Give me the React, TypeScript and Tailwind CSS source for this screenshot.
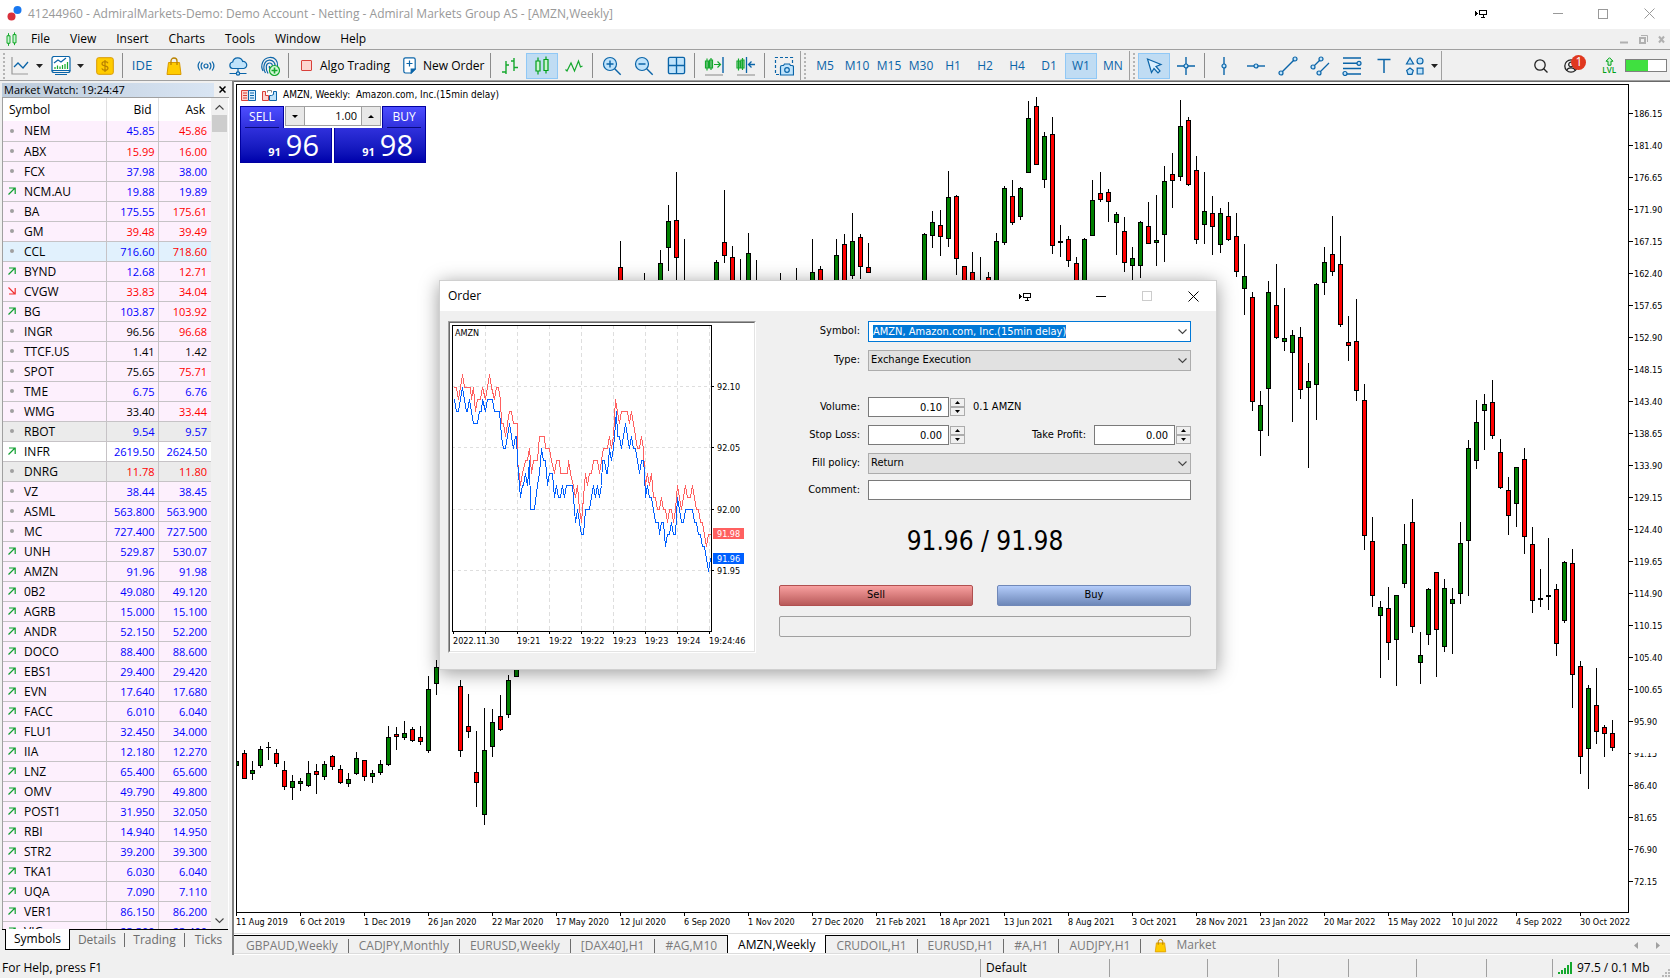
// src/App.tsx
import React, { useEffect, useRef, useState } from 'react';

type Tone = 'blue' | 'red' | 'black';
type Trend = 'flat' | 'up' | 'down';

interface Quote {
  symbol: string;
  bid: string;
  ask: string;
  trend: Trend;
  bidTone: Tone;
  askTone: Tone;
  row?: string;
}

const quote = (
  symbol: string,
  bid: string,
  ask: string,
  trend: Trend = 'up',
  bidTone: Tone = 'blue',
  askTone: Tone = 'blue',
  row?: string,
): Quote => ({ symbol, bid, ask, trend, bidTone, askTone, row });

const QUOTES: Quote[] = [
  quote('NEM', '45.85', '45.86', 'flat', 'blue', 'red'),
  quote('ABX', '15.99', '16.00', 'flat', 'red', 'red'),
  quote('FCX', '37.98', '38.00', 'flat'),
  quote('NCM.AU', '19.88', '19.89'),
  quote('BA', '175.55', '175.61', 'flat', 'blue', 'red'),
  quote('GM', '39.48', '39.49', 'flat', 'red', 'red'),
  quote('CCL', '716.60', '718.60', 'flat', 'blue', 'red', 'bg-[#e1f1fd]'),
  quote('BYND', '12.68', '12.71', 'up', 'blue', 'red'),
  quote('CVGW', '33.83', '34.04', 'down', 'red', 'red'),
  quote('BG', '103.87', '103.92', 'up', 'blue', 'red'),
  quote('INGR', '96.56', '96.68', 'flat', 'black', 'red'),
  quote('TTCF.US', '1.41', '1.42', 'flat', 'black', 'black'),
  quote('SPOT', '75.65', '75.71', 'flat', 'black', 'red'),
  quote('TME', '6.75', '6.76', 'flat'),
  quote('WMG', '33.40', '33.44', 'flat', 'black', 'red'),
  quote('RBOT', '9.54', '9.57', 'flat', 'blue', 'blue', 'bg-[#ebebeb]'),
  quote('INFR', '2619.50', '2624.50', 'up', 'blue', 'blue', 'bg-white'),
  quote('DNRG', '11.78', '11.80', 'flat', 'red', 'red', 'bg-[#ebebeb]'),
  quote('VZ', '38.44', '38.45', 'flat'),
  quote('ASML', '563.800', '563.900', 'flat'),
  quote('MC', '727.400', '727.500', 'flat'),
  quote('UNH', '529.87', '530.07'),
  quote('AMZN', '91.96', '91.98'),
  quote('0B2', '49.080', '49.120'),
  quote('AGRB', '15.000', '15.100'),
  quote('ANDR', '52.150', '52.200'),
  quote('DOCO', '88.400', '88.600'),
  quote('EBS1', '29.400', '29.420'),
  quote('EVN', '17.640', '17.680'),
  quote('FACC', '6.010', '6.040'),
  quote('FLU1', '32.450', '34.000'),
  quote('IIA', '12.180', '12.270'),
  quote('LNZ', '65.400', '65.600'),
  quote('OMV', '49.790', '49.800'),
  quote('POST1', '31.950', '32.050'),
  quote('RBI', '14.940', '14.950'),
  quote('STR2', '39.200', '39.300'),
  quote('TKA1', '6.030', '6.040'),
  quote('UQA', '7.090', '7.110'),
  quote('VER1', '86.150', '86.200'),
  quote('VIG', '23.300', '23.400'),
];

const TONES: Record<Tone, string> = {
  blue: 'text-[#0000ff]',
  red: 'text-[#ff0000]',
  black: 'text-black',
};

// [bar index, high, body top, body bottom, low, 1 = rising bar]
const CANDLES: number[][] = [
  [-1, 761, 761, 765, 765, 1], [0, 750, 753, 778, 778, 0], [1, 761, 770, 773, 779, 1],
  [2, 746, 749, 765, 767, 1], [3, 742, 747, 747, 759, 1], [4, 749, 753, 763, 766, 0],
  [5, 761, 770, 786, 789, 0], [6, 775, 781, 787, 799, 1], [7, 778, 781, 783, 790, 1],
  [8, 761, 773, 785, 786, 1], [9, 764, 771, 774, 793, 0], [10, 761, 764, 776, 779, 1],
  [11, 755, 756, 766, 769, 0], [12, 765, 769, 782, 783, 0], [13, 773, 779, 783, 786, 1],
  [14, 752, 758, 773, 774, 1], [15, 760, 760, 776, 780, 0], [16, 770, 773, 776, 782, 1],
  [17, 760, 764, 772, 774, 1], [18, 726, 737, 764, 765, 1], [19, 727, 734, 736, 749, 0],
  [20, 721, 733, 737, 739, 1], [21, 727, 729, 740, 741, 0], [22, 726, 737, 741, 744, 0],
  [23, 676, 689, 750, 752, 1], [24, 660, 667, 683, 694, 1], [27, 680, 686, 750, 756, 0],
  [28, 694, 726, 731, 737, 0], [29, 731, 772, 782, 806, 0], [30, 708, 750, 814, 824, 1],
  [31, 709, 722, 746, 756, 1], [32, 695, 716, 729, 730, 0], [33, 675, 680, 714, 717, 1],
  [34, 640, 650, 676, 676, 1], [47, 241, 267, 300, 300, 0], [50, 273, 290, 300, 300, 0],
  [52, 250, 263, 300, 300, 1], [53, 205, 221, 247, 270, 1], [54, 172, 220, 257, 300, 0],
  [55, 239, 290, 300, 300, 0], [59, 260, 262, 300, 300, 1], [60, 190, 242, 255, 262, 0],
  [61, 246, 257, 300, 300, 0], [62, 259, 290, 300, 300, 0], [63, 233, 253, 300, 300, 1],
  [64, 260, 290, 300, 300, 0], [67, 273, 290, 300, 300, 0], [69, 268, 290, 300, 300, 0],
  [71, 239, 272, 300, 300, 1], [72, 266, 269, 300, 300, 0], [74, 239, 255, 300, 300, 1],
  [75, 234, 244, 300, 300, 0], [76, 213, 241, 275, 278, 1], [77, 234, 237, 266, 278, 0],
  [78, 243, 267, 272, 272, 0], [85, 233, 234, 300, 300, 1], [86, 211, 222, 235, 247, 1],
  [87, 210, 225, 236, 255, 0], [88, 171, 197, 238, 246, 1], [89, 195, 196, 258, 274, 0],
  [90, 266, 266, 300, 300, 0], [91, 252, 272, 300, 300, 0], [92, 257, 290, 300, 300, 0],
  [93, 272, 277, 300, 300, 0], [94, 233, 241, 300, 300, 1], [95, 186, 188, 242, 244, 1],
  [96, 180, 196, 222, 224, 0], [97, 187, 188, 216, 219, 1], [98, 101, 118, 172, 172, 1],
  [99, 97, 106, 164, 164, 0], [100, 132, 136, 179, 187, 1], [101, 117, 134, 245, 253, 0],
  [102, 225, 241, 242, 256, 1], [103, 236, 239, 260, 266, 0], [104, 257, 263, 300, 300, 0],
  [105, 238, 239, 300, 300, 1], [106, 180, 200, 235, 235, 1], [107, 172, 193, 199, 201, 0],
  [108, 189, 192, 201, 221, 0], [109, 212, 214, 222, 254, 1], [110, 217, 231, 262, 271, 0],
  [111, 247, 258, 265, 300, 1], [112, 221, 222, 265, 277, 1], [113, 202, 226, 243, 243, 0],
  [114, 195, 240, 242, 265, 1], [115, 166, 181, 234, 261, 1], [116, 153, 174, 180, 207, 0],
  [117, 100, 126, 176, 180, 1], [118, 117, 120, 184, 185, 0], [119, 156, 170, 239, 243, 0],
  [120, 172, 211, 224, 243, 1], [121, 196, 213, 226, 254, 0], [122, 208, 213, 244, 252, 1],
  [123, 202, 216, 239, 240, 0], [124, 213, 236, 271, 276, 0], [125, 244, 276, 288, 314, 1],
  [126, 292, 297, 401, 410, 0], [127, 391, 405, 430, 455, 1], [128, 281, 292, 388, 435, 1],
  [129, 264, 305, 337, 338, 0], [130, 288, 338, 341, 350, 1], [131, 330, 335, 352, 421, 1],
  [132, 327, 337, 389, 398, 0], [133, 363, 381, 387, 467, 1], [134, 283, 284, 384, 419, 1],
  [135, 247, 262, 282, 294, 1], [136, 216, 254, 271, 275, 0], [137, 236, 264, 324, 326, 0],
  [138, 316, 342, 345, 360, 0], [139, 299, 341, 390, 400, 0], [140, 384, 400, 535, 549, 0],
  [141, 517, 541, 595, 606, 0], [142, 601, 607, 615, 677, 1], [143, 587, 608, 642, 659, 0],
  [144, 595, 595, 639, 685, 1], [145, 524, 544, 583, 587, 1], [146, 499, 522, 626, 632, 0],
  [147, 632, 655, 662, 683, 1], [148, 588, 589, 634, 644, 1], [149, 572, 572, 629, 676, 0],
  [150, 579, 588, 646, 651, 1], [151, 588, 599, 603, 653, 1], [152, 522, 543, 593, 603, 1],
  [153, 440, 448, 540, 595, 1], [154, 400, 422, 460, 468, 1], [155, 394, 404, 410, 449, 1],
  [156, 380, 402, 435, 438, 0], [157, 439, 452, 487, 488, 0], [158, 477, 490, 515, 534, 0],
  [159, 467, 467, 503, 526, 1], [160, 448, 459, 536, 553, 0], [161, 527, 544, 600, 612, 0],
  [162, 569, 598, 599, 606, 1], [163, 538, 595, 596, 609, 1], [164, 584, 589, 643, 655, 0],
  [165, 561, 562, 620, 622, 1], [166, 549, 563, 674, 707, 0], [167, 661, 666, 756, 773, 0],
  [168, 685, 688, 748, 788, 1], [169, 668, 705, 731, 743, 0], [170, 725, 727, 733, 756, 0],
  [171, 720, 733, 747, 750, 0],
];

const CHART_DATES = [
  '11 Aug 2019', '6 Oct 2019', '1 Dec 2019', '26 Jan 2020', '22 Mar 2020', '17 May 2020',
  '12 Jul 2020', '6 Sep 2020', '1 Nov 2020', '27 Dec 2020', '21 Feb 2021', '18 Apr 2021',
  '13 Jun 2021', '8 Aug 2021', '3 Oct 2021', '28 Nov 2021', '23 Jan 2022', '20 Mar 2022',
  '15 May 2022', '10 Jul 2022', '4 Sep 2022', '30 Oct 2022',
];

// Tick history: [time in thirds of a pixel, cents above 92.00]
const ASK_TICKS: number[][] = [
  [70, 10], [79, 10], [84, 9], [90, 10], [95, 11], [101, 10], [119, 10], [123, 9], [128, 10],
  [134, 8], [140, 9], [151, 9], [157, 10], [166, 9], [171, 10], [177, 11], [183, 10], [192, 9],
  [198, 10], [203, 10], [209, 9], [212, 7], [219, 7], [226, 6], [231, 7], [236, 8], [243, 8],
  [248, 7], [260, 7], [262, 4], [270, 2], [276, 3], [284, 4], [291, 4], [297, 5], [303, 3],
  [308, 4], [322, 4], [327, 6], [341, 6], [345, 5], [358, 5], [363, 4], [372, 3], [378, 4],
  [386, 4], [390, 3], [410, 3], [415, 4], [421, 3], [428, 2], [435, 1], [441, 2], [447, 0],
  [453, -1], [459, 1], [465, 3], [471, 2], [477, 3], [484, 3], [489, 4], [502, 4], [507, 3],
  [513, 4], [518, 5], [532, 5], [537, 6], [543, 5], [549, 6], [555, 9], [560, 8], [567, 7],
  [572, 8], [592, 8], [597, 7], [603, 8], [609, 7], [614, 6], [620, 5], [627, 5], [632, 6],
  [638, 5], [643, 3], [645, 2], [651, 3], [656, 2], [662, 3], [668, 1], [676, 1], [681, 0],
  [688, 0], [693, 1], [699, 0], [705, 0], [711, -1], [717, 0], [723, 0], [729, -1], [735, 0],
  [741, 2], [747, 1], [753, 0], [759, 1], [765, 2], [771, 1], [781, 1], [786, 2], [792, 1],
  [798, 0], [803, 0], [809, -1], [816, -1], [822, -2], [829, -3], [834, -2], [843, -2],
];

const BID_TICKS: number[][] = [
  [70, 9], [73, 9], [77, 8], [85, 8], [90, 9], [96, 10], [101, 9], [108, 8], [112, 8], [117, 9],
  [123, 8], [128, 7], [142, 7], [147, 8], [152, 8], [157, 9], [165, 8], [170, 9], [187, 9],
  [192, 8], [208, 8], [212, 6], [218, 5], [225, 5], [231, 6], [237, 7], [243, 6], [249, 5],
  [255, 6], [259, 6], [262, 4], [264, 3], [270, 1], [276, 2], [280, 2], [285, 3], [291, 2],
  [296, 4], [301, 0], [311, 0], [320, 2], [327, 3], [333, 5], [339, 4], [345, 4], [350, 2],
  [357, 3], [367, 3], [372, 1], [378, 2], [384, 1], [390, 1], [396, 2], [402, 1], [408, 2],
  [425, 2], [430, 1], [434, -1], [441, 0], [446, -1], [454, -2], [460, -2], [464, 0], [478, 0],
  [483, 1], [489, 2], [495, 1], [501, 2], [507, 1], [513, 2], [517, 4], [522, 4], [527, 3],
  [532, 3], [537, 5], [543, 4], [549, 5], [555, 7], [558, 8], [562, 6], [568, 6], [573, 5],
  [579, 6], [585, 7], [591, 6], [597, 5], [603, 6], [609, 5], [615, 5], [621, 4], [627, 3],
  [633, 4], [639, 4], [643, 3], [646, 1], [651, 2], [656, 1], [664, 1], [669, 0], [675, -1],
  [683, -1], [687, -2], [693, -1], [699, -1], [705, -3], [711, -2], [718, -2], [723, -1],
  [729, -2], [736, -2], [741, 1], [747, 0], [753, -1], [759, -1], [765, 0], [787, 0], [793, -1],
  [798, -1], [804, -2], [810, -2], [815, -3], [823, -3], [829, -4], [834, -5], [840, -4], [843, -4],
];

const BLUE = '#0a64a8';
const SKY = '#bfe3fb';
const GREEN = '#14a82d';

/* ---------- icons ---------- */

const Caret = () => (
  <svg width="7" height="4" viewBox="0 0 7 4"><path d="M0 0h7L3.5 4z" fill="#222" /></svg>
);

const Svg: React.FC<{ size?: number; children: React.ReactNode }> = ({ size = 20, children }) => (
  <svg width={size} height={size} viewBox="0 0 20 20" fill="none" stroke={BLUE} strokeWidth="1.2">
    {children}
  </svg>
);

const BagIcon: React.FC<{ size?: number }> = ({ size = 20 }) => (
  <svg width={size} height={size} viewBox="0 0 20 20" fill="none">
    <path d="M4.5 6.5h11L17 18.5H3z" fill="#fc0" stroke="#d99a00" />
    <path d="M7 9V5a3 3 0 0 1 6 0v4" stroke="#b98200" strokeWidth="1.3" />
  </svg>
);

const PinIcon = () => (
  <svg width="13" height="9" viewBox="0 0 13 9" fill="none" stroke="#000" shapeRendering="crispEdges">
    <path d="M0 2l3 2.500l-3 2.500z" fill="#000" stroke="none" />
    <path d="M4.500 1.500h7v4h-7zM8 6v2M6 8.500h4" />
  </svg>
);

const Chevron: React.FC<{ className?: string }> = ({ className }) => (
  <svg className={className} width="9" height="6" viewBox="0 0 9 6" fill="none" stroke="#444" strokeWidth="1.1">
    <path d="M.5.5l4 4l4-4" />
  </svg>
);

const CandlesIcon: React.FC<{ size?: number }> = ({ size = 20 }) => (
  <svg width={size} height={size} viewBox="0 0 20 20" fill="#c9f5d0" stroke="#00a018" strokeWidth="1.2">
    <path d="M6 1.500v17M14 .5v17" />
    <path d="M4 5h4v10H4zM12 3.500h4v11h-4z" />
  </svg>
);

const TrendIcon: React.FC<{ trend: Trend }> = ({ trend }) => {
  if (trend === 'flat') return <span className="mx-auto block size-1 rounded-full bg-[#a0a0a0]" />;
  if (trend === 'up')
    return (
      <svg className="mx-auto" width="8" height="8" viewBox="0 0 8 8" fill="none" stroke="#10a030" strokeWidth="1.2">
        <path d="M.5 7.500l6.500-6.500M1 1h6.200v6" />
      </svg>
    );
  return (
    <svg className="mx-auto" width="8" height="8" viewBox="0 0 8 8" fill="none" stroke="#f03030" strokeWidth="1.2">
      <path d="M.5.5l6.500 6.500M1 7h6.200V1" />
    </svg>
  );
};

/* ---------- toolbar ---------- */

const ToolButton: React.FC<{ label: string; active?: boolean; children: React.ReactNode }> = ({
  label,
  active,
  children,
}) => (
  <button
    type="button"
    aria-label={label}
    className={
      active
        ? 'flex h-[26px] w-8 shrink-0 items-center justify-center border border-[#90c8f6] bg-[#c0dcf3]'
        : 'flex h-[26px] w-8 shrink-0 items-center justify-center'
    }
  >
    {children}
  </button>
);

const Sep = () => <span className="mr-[3px] ml-0.5 h-[25px] w-px shrink-0 bg-[#8c8c8c]" />;

const Grip = () => (
  <span className="mx-[3px] h-[26px] w-[2px] shrink-0 bg-[repeating-linear-gradient(#b4b4b4_0_2px,transparent_2px_4px)]" />
);

const GroupEnd = () => <span className="h-full w-px shrink-0 bg-[#a0a0a0]" />;

const TIMEFRAMES = ['M5', 'M10', 'M15', 'M30', 'H1', 'H2', 'H4', 'D1', 'W1', 'MN'];

const Toolbar = () => {
  const [frame, setFrame] = useState<string>('W1');

  return (
    <div className="flex h-[30px] items-center overflow-hidden bg-[#f0f0f0] pt-px">
      <Grip />
      <button type="button" aria-label="Chart type" className="flex w-10 shrink-0 items-center gap-1.5 pl-0.5">
        <Svg>
          <path d="M2 1v17h16" stroke="#999" />
          <path d="M4 11l4-4l5 5l5-6" stroke={BLUE} strokeWidth="1.3" />
        </Svg>
        <Caret />
      </button>
      <button type="button" aria-label="Indicators" className="flex w-[42px] shrink-0 items-center gap-1.5 pl-[3px]">
        <Svg>
          <path d="M1 2.500a2 2 0 0 1 2-2h14a2 2 0 0 1 2 2v12H1z" fill="#fff" />
          <path d="M1 14.500c0 2 2 2 2 2h14s2 0 2-2M4 18.500h12" />
          <path d="M3 7l4-3l3 2l5-4" />
          <path d="M4 13v-2M6.500 13V9.500M9 13v-2.500M11.500 13V9M14 13V8M16.500 13V6" stroke={GREEN} />
        </Svg>
        <Caret />
      </button>
      <button type="button" aria-label="Deposit" className="flex w-[30px] shrink-0 justify-center">
        <svg width="18" height="18" viewBox="0 0 18 18" fill="none">
          <rect x=".7" y=".7" width="16.600" height="16.600" rx="2" fill="#fc0" stroke="#d99a00" />
          <path d="M12 6.200C11.500 5 10.500 4.700 9 4.700c-2 0-3 .8-3 2 0 3 6 1.300 6 4.400 0 1.300-1.200 2.200-3 2.200-1.600 0-2.800-.6-3.200-1.900M9 3v12" stroke="#b98200" strokeWidth="1.2" />
        </svg>
      </button>
      <Sep />
      <ToolButton label="IDE"><span className="text-[13px] text-[#0a64a8]">IDE</span></ToolButton>
      <ToolButton label="Market"><BagIcon /></ToolButton>
      <ToolButton label="Signals">
        <Svg>
          <circle cx="10" cy="10" r="2" />
          <path d="M6.500 6.500a5 5 0 0 0 0 7M13.500 6.500a5 5 0 0 1 0 7M3.800 5.500a7.500 7.500 0 0 0 0 9M16.200 5.500a7.500 7.500 0 0 1 0 9" />
        </Svg>
      </ToolButton>
      <ToolButton label="VPS">
        <Svg>
          <path d="M4.500 12.500a3.300 3.300 0 0 1 .2-6.500a5.200 5.200 0 0 1 10-.5a3.500 3.500 0 0 1 1 7z" fill={SKY} />
          <path d="M10 12.500V16M1.500 17.500h6.500M12 17.500h6.500" />
          <circle cx="10" cy="17.500" r="1.700" fill={SKY} />
        </Svg>
      </ToolButton>
      <ToolButton label="Fingerprint">
        <Svg>
          <path d="M3 15C0 9 3 2 9.500 1.500C15 1 18 5 17.500 10M5.500 17C2 11 4.500 4.500 9.500 4.200C13 4 15.300 7 15 10M8 17.500C5 12 6 7 9.500 7C11.500 7 12.500 8.500 12.500 10.500M10 13c-.6-1-.8-2-.6-3" />
          <circle cx="14.500" cy="14.500" r="5" fill="#d5f7d9" stroke={GREEN} />
          <path d="M14.500 11.500v6M11.500 14.500h6" stroke={GREEN} strokeWidth="1.600" />
        </Svg>
      </ToolButton>
      <Sep />
      <button type="button" className="flex w-[103px] shrink-0 items-center gap-2 pl-[9px] whitespace-nowrap">
        <span className="h-[11px] w-[11px] rounded-[1px] border border-[#d9403a] bg-[#fdd5d0]" />
        Algo Trading
      </button>
      <button type="button" className="flex w-[93px] shrink-0 items-center gap-[7px] pl-2 whitespace-nowrap">
        <svg width="13" height="17" viewBox="0 0 13 17" fill="none" stroke={BLUE} strokeWidth="1.200">
          <path d="M.8 2.500a1.700 1.700 0 0 1 1.700-1.700h8a1.700 1.700 0 0 1 1.700 1.700V12l-4 4H2.500a1.700 1.700 0 0 1-1.700-1.700z" fill="#fff" />
          <path d="M8.200 16v-4h4z" fill={BLUE} />
          <path d="M6.500 3.500v6M3.500 6.500h6" />
        </svg>
        New Order
      </button>
      <Sep />
      <ToolButton label="Bar chart">
        <Svg>
          <path d="M6 5v13M2 16h4M6 9h3M14 2v13M11 5h3M14 11.500h4" stroke={GREEN} strokeWidth="1.400" />
        </Svg>
      </ToolButton>
      <ToolButton label="Candlesticks" active><CandlesIcon /></ToolButton>
      <ToolButton label="Line chart">
        <Svg><path d="M1.500 13.500l1.500 1.500l4-8l3.500 8l4-10l2 6l2-1" stroke={GREEN} /></Svg>
      </ToolButton>
      <Sep />
      <ToolButton label="Zoom in">
        <Svg>
          <circle cx="8" cy="8" r="6.500" fill={SKY} />
          <path d="M12.700 12.700l6 6M8 4.500v7M4.500 8h7" strokeWidth="1.400" />
        </Svg>
      </ToolButton>
      <ToolButton label="Zoom out">
        <Svg>
          <circle cx="8" cy="8" r="6.500" fill={SKY} />
          <path d="M12.700 12.700l6 6M4.500 8h7" strokeWidth="1.400" />
        </Svg>
      </ToolButton>
      <ToolButton label="Tile windows">
        <Svg size={19}>
          <rect x="1.500" y="1.500" width="17" height="17" rx="1.500" fill={SKY} strokeWidth="1.400" />
          <path d="M10 1.500v17M1.500 10h17" strokeWidth="1.400" />
        </Svg>
      </ToolButton>
      <Sep />
      <ToolButton label="Auto scroll">
        <Svg>
          <path d="M3 2.500v12M7 2v12M1.500 5h3v7h-3zM5.500 4h3v8h-3zM10 8.500h6M13.500 5.500l3 3l-3 3" stroke={GREEN} />
          <path d="M19 1v16" strokeWidth="1.400" />
          <path d="M1 19h18" stroke="#999" />
        </Svg>
      </ToolButton>
      <ToolButton label="Chart shift">
        <Svg>
          <path d="M2.500 2.500v12M6.500 2v12M1 5h3v7H1zM5 4h3v8H5z" stroke={GREEN} />
          <path d="M10.500 1v16M19 8.500h-6M15.500 5.500l-3 3l3 3" strokeWidth="1.300" />
          <path d="M1 19h18" stroke="#999" />
        </Svg>
      </ToolButton>
      <Sep />
      <ToolButton label="Screenshot">
        <Svg>
          <path d="M5 18.500H1.500v-17h17V8" strokeDasharray="3 2" />
          <path d="M6.500 11a1.500 1.500 0 0 1 1.500-1.500h1.500l1-1.500h5l1 1.500H18a1.500 1.500 0 0 1 1.500 1.500v8h-13z" fill={SKY} />
          <circle cx="13" cy="14" r="2.300" />
        </Svg>
      </ToolButton>
      <GroupEnd />
      <Grip />
      {TIMEFRAMES.map((name) => (
        <button
          key={name}
          type="button"
          onClick={() => setFrame(name)}
          className={
            frame === name
              ? 'h-[26px] w-8 shrink-0 border border-[#90c8f6] bg-[#c0dcf3] text-[#0a64a8]'
              : 'h-[26px] w-8 shrink-0 text-[#0a64a8]'
          }
        >
          {name}
        </button>
      ))}
      <GroupEnd />
      <Grip />
      <ToolButton label="Cursor" active>
        <Svg><path d="M3.500 3l13.500 5.500l-5 2l4 4.500l-2 2l-4-4.500l-2.500 4z" fill="#d9efff" /></Svg>
      </ToolButton>
      <ToolButton label="Crosshair">
        <Svg><path d="M10 1v18M1 10h18" strokeWidth="1.400" /><circle cx="10" cy="10" r="2" fill={SKY} /></Svg>
      </ToolButton>
      <Sep />
      <ToolButton label="Vertical line">
        <Svg><path d="M10 1v18" strokeWidth="1.400" /><circle cx="10" cy="10" r="2" fill={SKY} /></Svg>
      </ToolButton>
      <ToolButton label="Horizontal line">
        <Svg><path d="M1 10h18" strokeWidth="1.400" /><circle cx="10" cy="10" r="2" fill={SKY} /></Svg>
      </ToolButton>
      <ToolButton label="Trend line">
        <Svg>
          <path d="M3 17L17 3" strokeWidth="1.400" />
          <circle cx="3" cy="17" r="2" fill={SKY} /><circle cx="17" cy="3" r="2" fill={SKY} />
        </Svg>
      </ToolButton>
      <ToolButton label="Channel">
        <Svg>
          <path d="M3 11l8-8M9 17L19 7" strokeWidth="1.300" />
          <circle cx="3" cy="11" r="2" fill={SKY} /><circle cx="11" cy="3" r="2" fill={SKY} /><circle cx="9" cy="17" r="2" fill={SKY} />
        </Svg>
      </ToolButton>
      <ToolButton label="Fibonacci">
        <Svg>
          <path d="M1 2h18M1 7.300h16M1 12.500h18M3 18h16" strokeWidth="1.400" />
          <circle cx="17" cy="7.300" r="2" fill={SKY} /><circle cx="3" cy="17.500" r="2" fill={SKY} />
        </Svg>
      </ToolButton>
      <ToolButton label="Text label">
        <Svg><path d="M3.500 3.500h13M10 3.500V17" strokeWidth="1.500" /></Svg>
      </ToolButton>
      <button type="button" aria-label="Objects" className="flex w-[41px] shrink-0 items-center gap-1.5 pl-[5px]">
        <Svg>
          <path d="M5 2l3.500 6h-7z" fill={SKY} />
          <circle cx="15" cy="5" r="3" fill={SKY} />
          <path d="M5 12l3.300 2.500l-1.300 3.800H3l-1.300-3.800z" fill={SKY} />
          <path d="M12.200 12.200h5.800V18h-5.800z" fill={SKY} />
        </Svg>
        <Caret />
      </button>
      <GroupEnd />
      <div className="ml-auto flex shrink-0 items-center pr-[3px]">
        <button type="button" aria-label="Search" className="mr-4">
          <svg width="14" height="14" viewBox="0 0 14 14" fill="none" stroke="#222" strokeWidth="1.300">
            <circle cx="6" cy="6" r="5.200" /><path d="M9.700 9.700l3.800 3.800" />
          </svg>
        </button>
        <button type="button" aria-label="Account" className="relative mr-6">
          <svg width="14" height="14" viewBox="0 0 14 14" fill="none" stroke="#222" strokeWidth="1.300">
            <circle cx="7" cy="7" r="6.200" /><circle cx="7" cy="5.500" r="2.300" /><path d="M3 11.500c.5-3.500 7.500-3.500 8 0" />
          </svg>
          <span className="absolute -top-1 left-[7px] flex size-[15px] items-center justify-center rounded-full bg-[#e0381f] text-xs text-white">1</span>
        </button>
        <div className="mr-[9px] flex flex-col items-center">
          <svg width="9" height="9" viewBox="0 0 9 9" fill="#c9f5d0" stroke="#00a018">
            <path d="M4.500.7l3.500 3.500h-2v4h-3v-4H1z" />
          </svg>
          <span className="text-[8px] leading-[8px] font-semibold text-[#00a018]">LVL</span>
        </div>
        <div className="h-[13px] w-[42px] border border-[#808080] bg-white">
          <div className="h-full w-[22px] bg-[#40e040]" />
        </div>
      </div>
    </div>
  );
};

/* ---------- market watch ---------- */

const MarketWatch = () => (
  <aside className="flex w-[230px] shrink-0 flex-col overflow-hidden border-r border-[#f0f0f0] bg-[#f0f0f0] pt-px pl-0.5">
    <div className="flex h-[15px] items-center justify-between pr-[3px]">
      <h2 className="w-[212px] bg-linear-to-r from-[#bccbdb] to-[#d9e5f3] pl-0.5 text-[11px] leading-[14px]">
        Market Watch: 19:24:47
      </h2>
      <button type="button" aria-label="Close panel">
        <svg width="7" height="7" viewBox="0 0 7 7" stroke="#000" strokeWidth="1.500"><path d="M.5.5l6 6M6.500.5l-6 6" /></svg>
      </button>
    </div>
    <div className="flex min-h-0 flex-1 overflow-hidden border-t border-l border-[#a0a0a0] bg-white">
      <div className="w-[208px] shrink-0 overflow-hidden">
        <table className="w-full table-fixed border-collapse text-xs">
          <colgroup>
            <col className="w-[18px]" />
            <col className="w-[85px]" />
            <col className="w-[52px]" />
            <col className="w-[53px]" />
          </colgroup>
          <thead>
            <tr className="h-[23px]">
              <th colSpan={2} className="border-r border-[#e0e0e0] pl-1.5 text-left font-normal">Symbol</th>
              <th className="border-r border-[#e0e0e0] pr-1.5 text-right font-normal">Bid</th>
              <th className="pr-1.5 text-right font-normal">Ask</th>
            </tr>
          </thead>
          <tbody>
            {QUOTES.map((q) => (
              <tr key={q.symbol} className={`h-5 border-b border-[#c6c3c6] ${q.row ?? 'bg-[#fdf0fd]'}`}>
                <td className="p-0"><TrendIcon trend={q.trend} /></td>
                <td className="border-r border-[#c6c3c6] p-0 pl-[3px] leading-[19px]">{q.symbol}</td>
                <td className={`border-r border-[#c6c3c6] p-0 pr-[3px] text-right text-[11px] leading-[19px] ${TONES[q.bidTone]}`}>{q.bid}</td>
                <td className={`p-0 pr-1 text-right text-[11px] leading-[19px] ${TONES[q.askTone]}`}>{q.ask}</td>
              </tr>
            ))}
          </tbody>
        </table>
      </div>
      <div className="flex w-[17px] flex-col items-center bg-[#f0f0f0]">
        <span className="flex h-[17px] items-center"><Chevron className="rotate-180" /></span>
        <span className="h-[17px] w-[15px] bg-[#cdcdcd]" />
        <span className="mt-auto flex h-[17px] items-center"><Chevron /></span>
      </div>
    </div>
    <div className="mr-px flex h-[26px] items-start border-t border-black text-[12px] text-[#6d6d6d]">
      <button type="button" className="-mt-px ml-[3px] h-[21px] w-[65px] border border-t-0 border-black bg-white text-black">Symbols</button>
      <button type="button" className="h-5 w-[54px]">Details</button>
      <span className="mt-[3px] h-[14px] w-px bg-[#6d6d6d]" />
      <button type="button" className="h-5 w-[59px]">Trading</button>
      <span className="mt-[3px] h-[14px] w-px bg-[#6d6d6d]" />
      <button type="button" className="h-5 flex-1 pl-1">Ticks</button>
    </div>
  </aside>
);

/* ---------- main chart ---------- */

const CandleChart = () => (
  <svg
    className="block shrink-0"
    width="1436"
    height="851"
    viewBox="234 82 1436 851"
    fontFamily="'DejaVu Sans Condensed', 'DejaVu Sans', sans-serif"
    fontSize="9"
  >
    <g shapeRendering="crispEdges">
      {CANDLES.map(([n, high, top, bottom, low, rising]) => {
        const x = 244 + n * 8;
        return (
          <g key={n}>
            <rect x={x} y={high} width="1" height={low - high + 1} />
            <rect x={x - 2} y={top} width="5" height={bottom - top + 1} />
            {bottom - top > 1 && (
              <rect x={x - 1} y={top + 1} width="3" height={bottom - top - 1} fill={rising ? '#008000' : '#ff0000'} />
            )}
          </g>
        );
      })}
      <rect x="234" y="86" width="2" height="826" fill="#fff" />
      <rect x="236.500" y="84.500" width="1392" height="828" fill="none" stroke="#000" />
      {CHART_DATES.map((date, i) => (
        <rect key={date} x={236 + i * 64} y="912" width="1" height="4" />
      ))}
      {Array.from({ length: 25 }, (_, i) => (
        <rect key={i} x="1629" y={113 + i * 32} width={i === 20 ? 2 : 4} height="1" />
      ))}
    </g>
    {CHART_DATES.map((date, i) => (
      <text key={date} x={236 + i * 64} y="925">{date}</text>
    ))}
    {Array.from({ length: 25 }, (_, i) => (
      <text key={i} x="1634" y={117 + i * 32}>{(186.15 - i * 4.75).toFixed(2)}</text>
    ))}
    {/* the hidden price line masks the upper half of this label */}
    <rect x="1633" y="745" width="34" height="8" fill="#fff" />
  </svg>
);

const OneClickTrading = () => (
  <div className="absolute top-6 left-1.5 grid grid-cols-2 gap-x-0.5 text-white">
    <div className="col-span-2 flex justify-between">
      <button type="button" className="h-[22px] w-11 border border-b-0 border-[#0000a0] bg-linear-to-b from-[#4d4dff] to-[#3030dc] px-1">
        <span className="block border-b border-[#0a0a80] leading-5">SELL</span>
      </button>
      <div className="flex h-5 w-24 border border-[#a0a0a0] bg-[#e8e8e8] text-black">
        <button type="button" aria-label="Decrease lots" className="flex w-[18px] items-center justify-center">
          <svg width="6" height="3" viewBox="0 0 6 3"><path d="M0 0h6L3 3z" /></svg>
        </button>
        <input
          aria-label="Lots"
          defaultValue="1.00"
          className="min-w-0 flex-1 border-x border-[#a0a0a0] bg-white pr-1 text-right text-[11px] outline-none"
        />
        <button type="button" aria-label="Increase lots" className="flex w-[18px] items-center justify-center">
          <svg width="6" height="3" viewBox="0 0 6 3"><path d="M0 3h6L3 0z" /></svg>
        </button>
      </div>
      <button type="button" className="h-[22px] w-11 border border-b-0 border-[#0000a0] bg-linear-to-b from-[#4d4dff] to-[#3030dc] px-1">
        <span className="block border-b border-[#0a0a80] leading-5">BUY</span>
      </button>
    </div>
    {['96', '98'].map((pips) => (
      <div
        key={pips}
        className="flex h-[35px] w-[92px] items-baseline justify-end gap-[5px] border-x border-b border-[#0000a0] bg-linear-to-b from-[#3030dc] to-[#0000ac] pr-3"
      >
        <span className="text-[11px] font-bold">91</span>
        <span className="text-[29px] leading-[33px]">{pips}</span>
      </div>
    ))}
  </div>
);

const CHART_TABS = [
  'GBPAUD,Weekly', 'CADJPY,Monthly', 'EURUSD,Weekly', '[DAX40],H1', '#AG,M10',
  'AMZN,Weekly', 'CRUDOIL,H1', 'EURUSD,H1', '#A,H1', 'AUDJPY,H1',
];

const ChartTabs = () => {
  const [tab, setTab] = useState<string>('AMZN,Weekly');

  return (
    <nav className="flex h-[18px] items-start border-t border-black bg-[#f0f0f0] pl-0.5 whitespace-nowrap text-[#7a7a7a]">
      {CHART_TABS.map((name, i) => {
        const active = name === tab;
        return (
          <React.Fragment key={name}>
            {i > 0 && !active && CHART_TABS[i - 1] !== tab && <span className="mt-[3px] h-[14px] w-px bg-[#6d6d6d]" />}
            <button
              type="button"
              onClick={() => setTab(name)}
              className={
                active
                  ? '-mt-px h-[19px] border border-t-0 border-black bg-white px-2.5 leading-[19px] text-black'
                  : 'h-[18px] px-2.5 leading-[19px]'
              }
            >
              {name}
            </button>
          </React.Fragment>
        );
      })}
      <span className="mt-[3px] h-[14px] w-px bg-[#6d6d6d]" />
      <button type="button" className="flex h-[18px] items-center gap-2 px-3">
        <BagIcon size={15} />
        Market
      </button>
      <span className="ml-auto flex h-[18px] items-center gap-[18px] pr-2.5">
        <svg width="4" height="7" viewBox="0 0 4 7"><path d="M4 0v7L0 3.500z" fill="#a0a0a0" /></svg>
        <svg width="4" height="7" viewBox="0 0 4 7"><path d="M0 0v7l4-3.500z" fill="#a0a0a0" /></svg>
      </span>
    </nav>
  );
};

const ChartWindow = () => (
  <section className="flex min-w-0 flex-1 flex-col border-l-2 border-[#808080]">
    <div className="relative min-h-0 flex-1 overflow-hidden border-t border-[#696969] bg-white">
      <CandleChart />
      <div className="absolute top-[7px] left-[7px] flex items-center gap-1.5 font-['DejaVu_Sans_Condensed'] text-[10px] leading-3">
        <svg width="15" height="11" viewBox="0 0 15 11" fill="none">
          <path d="M.5.5h7v10h-7z" fill="#fdd5d0" stroke="#d9403a" />
          <path d="M7.500.5h7v10h-7z" fill="#d9efff" stroke={BLUE} />
          <path d="M2 3h4M2 5.500h4M2 8h4" stroke="#d9403a" />
          <path d="M9 3h4M9 5.500h4M9 8h4" stroke={BLUE} />
        </svg>
        <svg width="15" height="11" viewBox="0 0 15 11" fill="none">
          <path d="M.5 1.500h3v4h3v5h-6z" fill="#fdd5d0" stroke="#d9403a" />
          <path d="M14.500 1.500h-3v3l-2 1h-2v5h7z" fill="#bfe3fb" stroke={BLUE} />
          <path d="M5.500 2.500v-2h4v2" stroke="#888" />
        </svg>
        <span className="whitespace-pre">AMZN, Weekly:  Amazon.com, Inc.(15min delay)</span>
      </div>
      <OneClickTrading />
    </div>
    <div className="h-0.5 border-t border-[#dcdcdc] bg-white" />
    <ChartTabs />
    <div className="h-0.5 border-t border-[#dcdcdc] bg-white" />
  </section>
);

/* ---------- order dialog ---------- */

const tickPath = (ticks: number[][]): string =>
  ticks
    .map(([t, cents], i) => {
      const x = Math.round(t / 3 - 18);
      const y = Math.round((718 - cents * 36.8) / 3 - 51);
      return `${i === 0 ? 'M' : 'L'}${x} ${y}`;
    })
    .join('');

const TickChart = () => (
  <div className="h-[332px] w-[308px] shrink-0 border border-t-[#a0a0a0] border-r-white border-b-white border-l-[#a0a0a0]">
    <svg
      className="block border border-t-[#696969] border-r-[#e3e3e3] border-b-[#e3e3e3] border-l-[#696969] bg-white"
      width="306"
      height="330"
      viewBox="2 2 304 328"
      fontFamily="'DejaVu Sans Condensed', 'DejaVu Sans', sans-serif"
      fontSize="9"
    >
      <g shapeRendering="crispEdges" fill="none">
        {[65, 126, 188, 249].map((y) => (
          <g key={y}>
            <path d={`M4 ${y}.5H263`} stroke="#dedede" strokeDasharray="3 3" />
            <path d={`M263 ${y}.5h3`} stroke="#000" />
          </g>
        ))}
        {[5, 37, 69, 101, 133, 165, 197, 229, 261].map((x) => (
          <g key={x}>
            {x > 5 && <path d={`M${x}.5 4V310`} stroke="#dedede" strokeDasharray="4 3" />}
            <path d={`M${x}.5 310v3`} stroke="#000" />
          </g>
        ))}
        <path d={tickPath(ASK_TICKS)} stroke="#ff6060" transform="translate(.5 .5)" />
        <path d={tickPath(BID_TICKS)} stroke="#0060ff" transform="translate(.5 .5)" />
        <path d="M4.500 4.500h259v306H4.500z" stroke="#000" />
        <path d="M265 207h31v11h-31z" fill="#ff6060" />
        <path d="M265 232h31v11h-31z" fill="#0060ff" />
      </g>
      <text x="7" y="15">AMZN</text>
      <text x="269" y="69">92.10</text>
      <text x="269" y="130">92.05</text>
      <text x="269" y="192">92.00</text>
      <text x="269" y="253">91.95</text>
      <text x="269" y="216" fill="#fff">91.98</text>
      <text x="269" y="241" fill="#fff">91.96</text>
      {['2022.11.30', '', '19:21', '19:22', '19:22', '19:23', '19:23', '19:24', '19:24:46'].map((t, i) => (
        <text key={i} x={5 + i * 32} y="323">{t}</text>
      ))}
    </svg>
  </div>
);

const SpinBox: React.FC<{ id: string; value: string }> = ({ id, value }) => (
  <span className="flex items-center gap-px">
    <input id={id} defaultValue={value} className="h-5 w-[81px] border border-[#7a7a7a] bg-white pr-1.5 text-right outline-none" />
    <span className="flex flex-col">
      <button type="button" aria-label={`Increase ${id}`} className="flex h-[9px] w-[15px] items-center justify-center border border-[#acacac]">
        <svg width="5" height="3" viewBox="0 0 5 3"><path d="M0 3h5L2.500 0z" /></svg>
      </button>
      <button type="button" aria-label={`Decrease ${id}`} className="flex h-[9px] w-[15px] items-center justify-center border border-[#acacac]">
        <svg width="5" height="3" viewBox="0 0 5 3"><path d="M0 0h5L2.500 3z" /></svg>
      </button>
    </span>
  </span>
);

const SelectBox: React.FC<{ id: string; value: string }> = ({ id, value }) => (
  <span className="relative flex flex-1 items-center">
    <select id={id} className="h-[21px] w-full appearance-none border border-[#acacac] bg-[#e1e1e1] pl-0.5 outline-none">
      <option>{value}</option>
    </select>
    <Chevron className="pointer-events-none absolute right-1" />
  </span>
);

const LABEL = 'w-[81px] shrink-0 text-right whitespace-nowrap';

const OrderDialog = () => {
  const symbolRef = useRef<HTMLInputElement>(null);

  // The symbol is ready to be overwritten as soon as the dialog opens
  useEffect(() => {
    symbolRef.current?.focus();
    symbolRef.current?.select();
  }, []);

  return (
    <div
      role="dialog"
      aria-label="Order"
      className="absolute top-[280px] left-[439px] w-[778px] border border-[#d0d0d0] bg-[#f0f0f0] shadow-[0_3px_18px_rgba(0,0,0,0.4)]"
    >
      <div className="flex h-[30px] items-center bg-white pr-[17px] pl-2">
        <h2 className="mr-auto">Order</h2>
        <span className="mr-16"><PinIcon /></span>
        <button type="button" aria-label="Minimize" className="mr-9 h-px w-2.5 bg-black" />
        <button type="button" aria-label="Maximize" disabled className="mr-9 size-2.5 border border-[#ccc]" />
        <button type="button" aria-label="Close">
          <svg width="11" height="11" viewBox="0 0 11 11" stroke="#000"><path d="M.5.5l10 10M10.500.5l-10 10" /></svg>
        </button>
      </div>
      <div className="flex gap-[23px] pt-2.5 pr-[25px] pb-4 pl-2 font-['DejaVu_Sans_Condensed'] text-[11px]">
        <TickChart />
        <form className="flex flex-1 flex-col" onSubmit={(e) => e.preventDefault()}>
          <div className="flex items-center gap-2">
            <label htmlFor="symbol" className={LABEL}>Symbol:</label>
            <span className="relative flex flex-1 items-center">
              <input
                ref={symbolRef}
                id="symbol"
                defaultValue="AMZN, Amazon.com, Inc.(15min delay)"
                className="h-[21px] w-full border border-[#0078d7] bg-white pl-1 outline-none selection:bg-[#0078d7] selection:text-white"
              />
              <Chevron className="pointer-events-none absolute right-1" />
            </span>
          </div>
          <div className="mt-2 flex items-center gap-2">
            <label htmlFor="type" className={LABEL}>Type:</label>
            <SelectBox id="type" value="Exchange Execution" />
          </div>
          <div className="mt-[26px] flex items-center gap-2">
            <label htmlFor="volume" className={LABEL}>Volume:</label>
            <SpinBox id="volume" value="0.10" />
            <span>0.1 AMZN</span>
          </div>
          <div className="mt-2 flex items-center gap-2">
            <label htmlFor="stop-loss" className={LABEL}>Stop Loss:</label>
            <SpinBox id="stop-loss" value="0.00" />
            <label htmlFor="take-profit" className="ml-auto whitespace-nowrap">Take Profit:</label>
            <SpinBox id="take-profit" value="0.00" />
          </div>
          <div className="mt-2 flex items-center gap-2">
            <label htmlFor="fill-policy" className={LABEL}>Fill policy:</label>
            <SelectBox id="fill-policy" value="Return" />
          </div>
          <div className="mt-1.5 flex items-center gap-2">
            <label htmlFor="comment" className={LABEL}>Comment:</label>
            <input id="comment" className="h-5 flex-1 border border-[#7a7a7a] bg-white px-1 outline-none" />
          </div>
          <p className="mt-[25px] text-center text-[26px] leading-8">91.96 / 91.98</p>
          <div className="mt-7 grid grid-cols-2 gap-6">
            <button type="submit" className="h-[21px] rounded-xs border border-[#b05050] bg-linear-to-b from-[#f8a0a0] to-[#b85a5a]">Sell</button>
            <button type="submit" className="h-[21px] rounded-xs border border-[#7088b8] bg-linear-to-b from-[#b4ccfa] to-[#6e88b8]">Buy</button>
          </div>
          <div className="mt-2.5 h-[21px] rounded-xs border border-[#a0a0a0]" />
        </form>
      </div>
    </div>
  );
};

/* ---------- window frame ---------- */

const TitleBar = () => (
  <header className="flex h-[29px] shrink-0 items-center bg-white pr-[15px] pb-0.5 pl-[7px] text-[#999]">
    <svg className="mr-1.5" width="15" height="15" viewBox="0 0 15 15">
      <circle cx="10.500" cy="4" r="4" fill="#1878f0" />
      <circle cx="4.500" cy="10.500" r="4" fill="#d8303c" />
    </svg>
    <h1 className="mr-auto whitespace-nowrap">
      41244960 - AdmiralMarkets-Demo: Demo Account - Netting - Admiral Markets Group AS - [AMZN,Weekly]
    </h1>
    <span className="mr-[65px]"><PinIcon /></span>
    <button type="button" aria-label="Minimize" className="mr-[35px] h-px w-2.5 bg-[#999]" />
    <button type="button" aria-label="Maximize" className="mr-9 size-2.5 border border-[#999]" />
    <button type="button" aria-label="Close">
      <svg width="11" height="11" viewBox="0 0 11 11" stroke="#999"><path d="M.5.5l10 10M10.500.5l-10 10" /></svg>
    </button>
  </header>
);

const MenuBar = () => (
  <nav className="flex h-[21px] shrink-0 items-center gap-5 border-b border-[#a0a0a0] bg-[#f0f0f0] pr-1 pl-1">
    <span className="-mr-2"><CandlesIcon size={15} /></span>
    {['File', 'View', 'Insert', 'Charts', 'Tools', 'Window', 'Help'].map((item) => (
      <button key={item} type="button">{item}</button>
    ))}
    <svg className="ml-auto" width="46" height="9" viewBox="0 0 46 9" fill="none" stroke="#b0b0b0">
      <path d="M0 7.500h8" strokeWidth="2" />
      <path d="M20 3h5v5h-5z" strokeWidth="2" /><path d="M21 .5h6.500V7" />
      <path d="M39 1.500l5 6M44 1.500l-5 6" strokeWidth="2" />
    </svg>
  </nav>
);

const StatusBar = () => (
  <footer className="flex h-[23px] shrink-0 items-center bg-[#f0f0f0] pt-0.5">
    <span className="mr-auto pl-0.5">For Help, press F1</span>
    <span className="h-[18px] w-[129px] border-l border-[#a0a0a0] pl-[5px] leading-[18px]">Default</span>
    <span className="h-[18px] w-[98px] border-l border-[#a0a0a0]" />
    <span className="h-[18px] w-[71px] border-l border-[#a0a0a0]" />
    <span className="h-[18px] w-[70px] border-l border-[#a0a0a0]" />
    <span className="h-[18px] w-[68px] border-l border-[#a0a0a0]" />
    <span className="h-[18px] w-[70px] border-l border-[#a0a0a0]" />
    <span className="h-[18px] w-[66px] border-l border-[#a0a0a0]" />
    <span className="flex h-[18px] w-[118px] items-center gap-[5px] border-l border-[#a0a0a0] pl-[5px]">
      <svg width="14" height="12" viewBox="0 0 14 12" fill={GREEN} shapeRendering="crispEdges">
        <path d="M0 10h2v2H0zM3 8h2v4H3zM6 6h2v6H6zM9 3h2v9H9zM12 0h2v12h-2z" />
      </svg>
      <span className="whitespace-nowrap">97.5 / 0.1 Mb</span>
      <svg className="mt-auto ml-auto" width="8" height="8" viewBox="0 0 8 8" fill="#b8b8b8">
        <path d="M6 0h2v2H6zM3 3h2v2H3zM6 3h2v2H6zM0 6h2v2H0zM3 6h2v2H3zM6 6h2v2H6z" />
      </svg>
    </span>
  </footer>
);

const App: React.FC = () => (
  <div className="relative flex h-screen flex-col overflow-hidden bg-[#f0f0f0] font-['Open_Sans',sans-serif] text-xs text-black">
    <TitleBar />
    <MenuBar />
    <Toolbar />
    <main className="flex min-h-0 flex-1 border-t border-[#a0a0a0]">
      <MarketWatch />
      <div className="w-0.5 shrink-0" />
      <ChartWindow />
    </main>
    <StatusBar />
    <OrderDialog />
  </div>
);

export default App;
